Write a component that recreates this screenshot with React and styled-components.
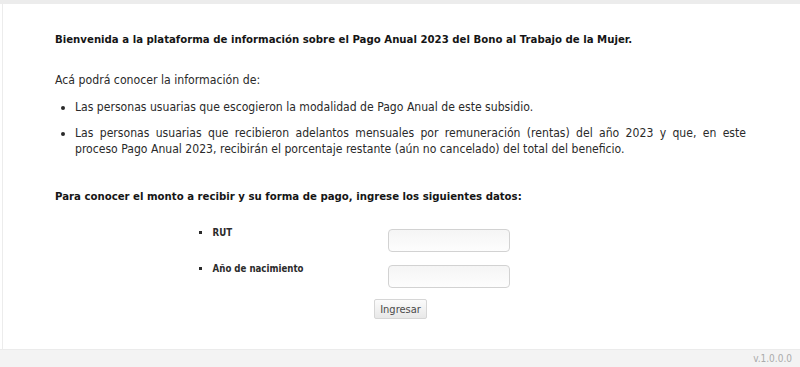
import React from 'react'
import styled, { createGlobalStyle } from 'styled-components'

const GlobalStyle = createGlobalStyle`
  html, body {
    margin: 0;
    padding: 0;
    background: #ffffff;
  }
  body {
    font-family: "DejaVu Sans Condensed", "DejaVu Sans", sans-serif;
    color: #2a2a2a;
  }
`

const Page = styled.div`
  height: 367px;
  display: flex;
  flex-direction: column;
  border-top: 4px solid #ececec;
  box-sizing: border-box;
  background: #fff;
`

const Main = styled.div`
  flex: 1;
  margin-left: 2px;
  border-left: 1px solid #ececec;
  padding: 28px 54px 0 52px;
`

const Title = styled.p`
  margin: 0 0 24px;
  font-size: 11.3px;
  line-height: 16px;
  font-weight: bold;
  color: #151515;
`

const Intro = styled.p`
  margin: 0 0 11px;
  font-size: 12.2px;
  line-height: 16px;
`

const InfoList = styled.ul`
  margin: 0 0 32px;
  padding-left: 20px;
  list-style: disc;
`

const InfoItem = styled.li`
  font-size: 12.1px;
  line-height: 16px;
  text-align: justify;
  margin-bottom: 10px;
`

const FormTitle = styled(Title)`
  margin-bottom: 21px;
`

const FormGrid = styled.div`
  display: grid;
  grid-template-columns: 189px 122px;
  row-gap: 10px;
  padding-left: 144px;
`

const Label = styled.div`
  display: list-item;
  list-style: square inside;
  font-size: 9.6px;
  line-height: 13px;
  font-weight: bold;
  color: #2b2b2b;
`

const Input = styled.input`
  width: 122px;
  height: 23px;
  margin-top: 3px;
  box-sizing: border-box;
  border: 1px solid #d2d2d2;
  border-radius: 4px;
  background: linear-gradient(#f5f5f5, #fdfdfd);
`

const Actions = styled.div`
  display: flex;
  justify-content: center;
  margin-top: 11px;
`

const Button = styled.button`
  height: 20px;
  padding: 0 5px;
  font-family: inherit;
  font-size: 11px;
  color: #4a4a4a;
  border: 1px solid #d6d6d6;
  border-radius: 2px;
  background: linear-gradient(#fbfbfb, #e8e8e8);
`

const Footer = styled.div`
  height: 17px;
  background: #f3f3f3;
  border-top: 1px solid #ebebeb;
  display: flex;
  align-items: center;
  justify-content: flex-end;
  padding-right: 8px;
  font-size: 10px;
  color: #ababab;
`

export default function App() {
  return (
    <>
      <GlobalStyle />
      <Page>
        <Main>
          <Title>
            Bienvenida a la plataforma de información sobre el Pago Anual 2023 del Bono al Trabajo de la Mujer.
          </Title>
          <Intro>Acá podrá conocer la información de:</Intro>
          <InfoList>
            <InfoItem>
              Las personas usuarias que escogieron la modalidad de Pago Anual de este subsidio.
            </InfoItem>
            <InfoItem>
              Las personas usuarias que recibieron adelantos mensuales por remuneración (rentas) del año 2023 y que, en este proceso{'\u00a0'}Pago Anual 2023, recibirán el porcentaje restante (aún no cancelado) del total del beneficio.
            </InfoItem>
          </InfoList>
          <FormTitle>
            Para conocer el monto a recibir y su forma de pago, ingrese los siguientes datos:
          </FormTitle>
          <FormGrid>
            <Label>RUT</Label>
            <Input type="text" />
            <Label>Año de nacimiento</Label>
            <Input type="text" />
          </FormGrid>
          <Actions>
            <Button type="button">Ingresar</Button>
          </Actions>
        </Main>
        <Footer>v.1.0.0.0</Footer>
      </Page>
    </>
  )
}
